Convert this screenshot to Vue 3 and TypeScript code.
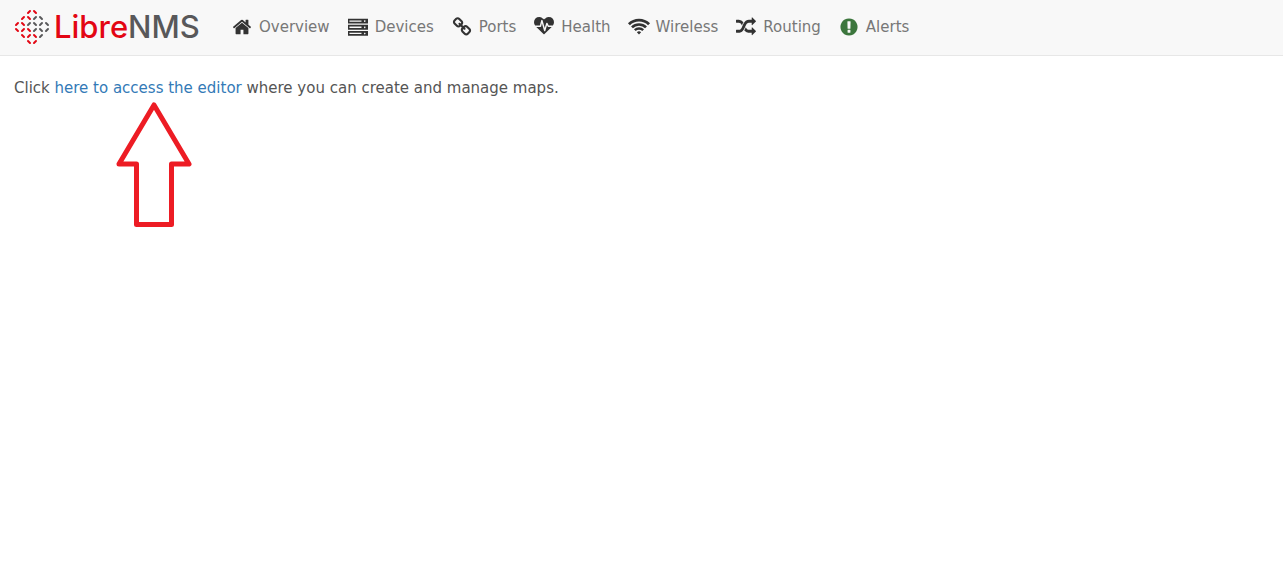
<script setup lang="ts">
interface NavItem {
  label: string
  icon: string
  alert?: boolean
}

interface Dash {
  d: string
  red: boolean
}

const items: NavItem[] = [
  {
    label: 'Overview',
    icon: 'M1472 992v480q0 26-19 45t-45 19h-384v-384h-256v384h-384q-26 0-45-19t-19-45v-480q0-1 .5-3t.5-3l575-474 575 474q1 2 1 6zm223-69l-62 74q-8 9-21 11h-3q-13 0-21-7l-692-577-692 577q-12 8-24 7-13-2-21-11l-62-74q-8-10-7-23.5t11-21.5l719-599q32-26 76-26t76 26l244 204v-195q0-14 9-23t23-9h192q14 0 23 9t9 23v408l219 182q10 8 11 21.5t-7 23.5z',
  },
  {
    label: 'Devices',
    icon: 'M0 150h1792v440H0zM128 310v120h1080V310zM1500 300a70 70 0 1 0 .1 0zM0 700h1792v440H0zM128 860v120h1080V860zM1500 850a70 70 0 1 0 .1 0zM0 1250h1792v440H0zM128 1410v120h1080v-120zM1500 1400a70 70 0 1 0 .1 0z',
  },
  {
    label: 'Ports',
    icon: 'M1520 1216q0-40-28-68l-208-208q-28-28-68-28-42 0-72 32 3 3 19 18.5t21.5 21.5 15 19 13 25.5 3.5 27.5q0 40-28 68t-68 28q-15 0-27.5-3.5t-25.5-13-19-15-21.5-21.5-18.5-19q-33 31-33 73 0 40 28 68l206 207q27 27 68 27 40 0 68-26l147-146q28-28 28-67zm-703-705q0-40-28-68l-206-207q-28-28-68-28-39 0-68 27l-147 146q-28 28-28 67 0 40 28 68l208 208q27 27 68 27 42 0 72-31-3-3-19-18.5t-21.5-21.5-15-19-13-25.5-3.5-27.5q0-40 28-68t68-28q15 0 27.5 3.5t25.5 13 19 15 21.5 21.5 18.5 19q33-31 33-73zm895 705q0 120-85 203l-147 146q-83 83-203 83-121 0-204-85l-206-207q-83-83-83-203 0-123 88-209l-88-88q-86 88-208 88-120 0-204-84l-208-208q-84-84-84-204t85-203l147-146q83-83 203-83 121 0 204 85l206 207q83 83 83 203 0 123-88 209l88 88q86-88 208-88 120 0 204 84l208 208q84 84 84 204z',
  },
  {
    label: 'Health',
    icon: 'M1280 896h305q-5 6-10 10.5t-9 7.5l-3 4-623 600q-18 18-44 18t-44-18l-624-602q-5-2-21-20h369q22 0 39.5-13.5t22.5-34.5l70-281 190 667q6 20 23 33t39 13q21 0 38-13t23-33l146-485 56 112q18 35 57 35zm512-428q0 145-103 300h-369l-111-221q-8-17-25.5-27t-36.5-8q-45 5-56 46l-129 430-196-686q-6-20-23.5-33t-39.5-13-39 13.5-22 34.5l-116 464h-423q-103-155-103-300 0-220 127-344t351-124q62 0 126.5 21.5t120 58 95.5 68.5 76 68q36-36 76-68t95.5-68.5 120-58 126.5-21.5q224 0 351 124t127 344z',
  },
  {
    label: 'Wireless',
    icon: 'M896 1560L705 1369A270 270 0 0 1 1087 1369ZM599 1263L443 1107A640 640 0 0 1 1349 1107L1193 1263A420 420 0 0 0 599 1263ZM352 1016L182 846A1010 1010 0 0 1 1610 846L1440 1016A770 770 0 0 0 352 1016ZM83 747L-94 570A1400 1400 0 0 1 1886 570L1709 747A1150 1150 0 0 0 83 747Z',
  },
  {
    label: 'Routing',
    icon: 'M666 481q-60 92-137 273-22-45-37-72.5t-40.5-63.5-51-56.5-63-35-81.5-14.5h-224q-14 0-23-9t-9-23v-192q0-14 9-23t23-9h224q250 0 410 225zm1126 799q0 14-9 23l-320 320q-9 9-23 9-13 0-22.5-9.5t-9.5-22.5v-192q-32 0-85 .5t-81 1-73-1-71-5-64-10.5-63-18.5-58-28.5-59-40-55-53.5-56-69.5q59-93 136-273 22 45 37 72.5t40.5 63.5 51 56.5 63 35 81.5 14.5h256v-192q0-14 9-23t23-9q12 0 24 10l319 319q9 9 9 23zm0-896q0 14-9 23l-320 320q-9 9-23 9-13 0-22.5-9.5t-9.5-22.5v-192h-256q-48 0-87 15t-69 45-51 61.5-45 77.5q-32 62-78 171-29 66-49.5 111t-54 105-64 100-74 83-90 68.5-106.5 42-128 16.5h-224q-14 0-23-9t-9-23v-192q0-14 9-23t23-9h224q48 0 87-15t69-45 51-61.5 45-77.5q32-62 78-171 29-66 49.5-111t54-105 64-100 74-83 90-68.5 106.5-42 128-16.5h256v-192q0-14 9-23t23-9q12 0 24 10l319 319q9 9 9 23z',
  },
  {
    label: 'Alerts',
    icon: 'M896 128q209 0 385.5 103t279.5 279.5 103 385.5-103 385.5-279.5 279.5-385.5 103-385.5-103-279.5-279.5-103-385.5 103-385.5 279.5-279.5 385.5-103zm128 1247v-190q0-14-9-23.5t-22-9.5h-192q-13 0-23 10t-10 23v190q0 13 10 23t23 10h192q13 0 22-9.5t9-23.5zm-2-344l18-621q0-12-10-18-10-8-24-8h-220q-14 0-24 8-10 6-10 18l17 621q0 10 10 17.5t24 7.5h185q14 0 23.5-7.5t10.5-17.5z',
    alert: true,
  },
]

// Dashes of the diamond lattice: R is red, G is grey, one string per row.
const rows = ['RR', 'RRGG', 'RRGGGG', 'RRRGGG', 'RRRG', 'RR']
const dashes: Dash[] = rows.flatMap((row, r) =>
  [...row].map((c, i) => {
    const x = 18 + (i - (row.length - 1) / 2) * 6
    const y = 3 + r * 6
    const rising = (i % 2 === 0) === (r < 3)
    const s = rising ? 1 : -1
    return { d: `M${x - 1} ${y + s}L${x + 1} ${y - s}`, red: c === 'R' }
  }),
)
</script>

<template>
  <header class="navbar">
    <a class="brand" href="#" aria-label="LibreNMS">
      <svg class="mark" viewBox="0 0 36 36" aria-hidden="true">
        <path v-for="dash in dashes" :key="dash.d" :d="dash.d" :class="{ red: dash.red }" />
      </svg>
      <span class="wordmark"><span class="libre">Libre</span>NMS</span>
    </a>
    <nav class="menu">
      <a v-for="item in items" :key="item.label" href="#" class="item">
        <svg class="icon" :class="{ alert: item.alert }" viewBox="0 0 1792 1792" aria-hidden="true">
          <path :d="item.icon" fill-rule="evenodd" />
        </svg>
        <span>{{ item.label }}</span>
      </a>
    </nav>
  </header>
  <main class="content">
    <p class="hint">Click <a href="#">here to access the editor</a> where you can create and manage maps.</p>
    <svg class="arrow" viewBox="0 0 74 126" aria-hidden="true">
      <path d="M37 3L72 62H54.500V122.500H19.500V62H2Z" />
    </svg>
  </main>
</template>

<style>
body {
  margin: 0;
  background: #fff;
}
</style>

<style scoped>
.navbar {
  display: flex;
  align-items: center;
  box-sizing: border-box;
  height: 56px;
  padding: 0 0 2px 14px;
  background: #f8f8f8;
  border-bottom: 1px solid #e7e7e7;
  font: 15px/20px Verdana, "DejaVu Sans", sans-serif;
}
.brand {
  display: flex;
  align-items: center;
  gap: 4px;
  width: 217px;
  flex: none;
  color: #58585a;
  text-decoration: none;
}
.mark {
  width: 36px;
  height: 36px;
  flex: none;
  fill: none;
  stroke: #58585a;
  stroke-width: 2;
  stroke-linecap: round;
}
.mark .red {
  stroke: #e30613;
}
.wordmark {
  font: 500 31px/36px Inter, sans-serif;
}
.libre {
  color: #e30613;
}
.menu {
  display: flex;
  gap: 17px;
}
.item {
  display: flex;
  align-items: center;
  gap: 6px;
  color: #777;
  text-decoration: none;
  white-space: nowrap;
}
.icon {
  width: 20px;
  height: 20px;
  margin: 0 1px;
  overflow: visible;
  fill: #333;
}
.icon.alert {
  fill: #3c763d;
}
.content {
  padding: 22px 14px;
  color: #555;
  font: 15px/20px Verdana, "DejaVu Sans", sans-serif;
}
.hint {
  margin: 0;
}
.hint a {
  color: #337ab7;
  text-decoration: none;
}
.arrow {
  display: block;
  width: 74px;
  height: 126px;
  margin: 4px 0 0 103px;
  overflow: visible;
  fill: none;
  stroke: #ed1c24;
  stroke-width: 5;
  stroke-linejoin: round;
}
</style>
